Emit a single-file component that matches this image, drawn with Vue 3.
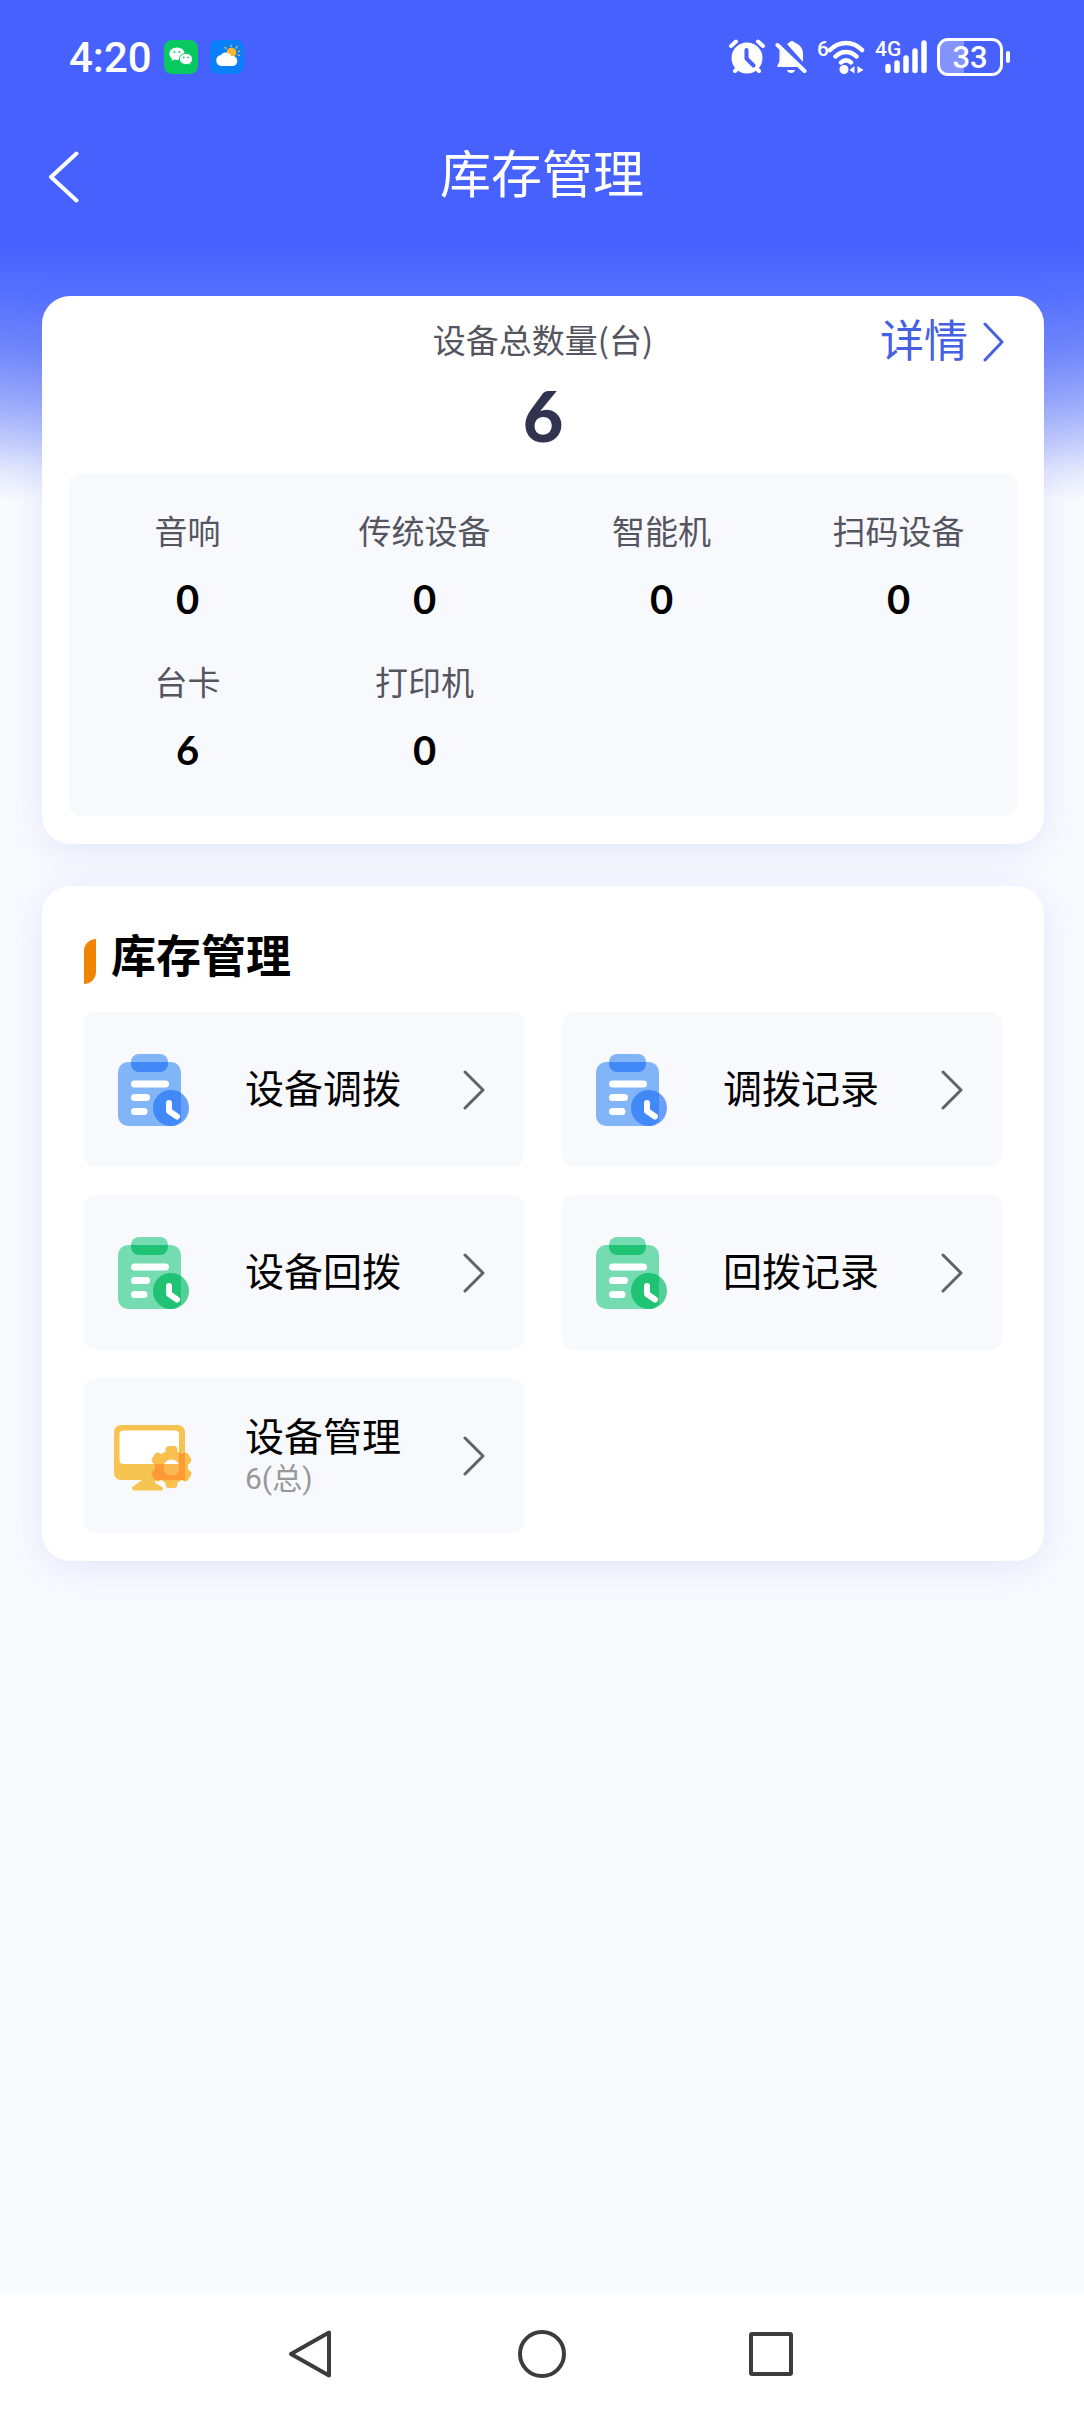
<script setup>
const stats = [
  { label: '音响', value: 0 },
  { label: '传统设备', value: 0 },
  { label: '智能机', value: 0 },
  { label: '扫码设备', value: 0 },
  { label: '台卡', value: 6 },
  { label: '打印机', value: 0 },
]

const entries = [
  { title: '设备调拨', icon: 'board', tone: 'blue' },
  { title: '调拨记录', icon: 'board', tone: 'blue' },
  { title: '设备回拨', icon: 'board', tone: 'green' },
  { title: '回拨记录', icon: 'board', tone: 'green' },
  { title: '设备管理', icon: 'monitor', note: '6(总)' },
]
</script>

<template>
  <div class="page">
    <div class="status">
      <span class="time">4:20</span>
      <svg class="app-icon" viewBox="0 0 34 34" aria-hidden="true">
        <rect width="34" height="34" rx="8" fill="#07c95f" />
        <path d="M13 7.500c-4.400 0-7.600 2.800-7.600 6.300 0 2 1 3.700 2.700 4.900l-.7 2.300 2.700-1.400c.9.300 1.800.4 2.900.4 4.300 0 7.600-2.700 7.600-6.200S17.300 7.500 13 7.500z" fill="#fff" />
        <path d="M22 13.500c-3.800 0-6.600 2.400-6.600 5.500s2.800 5.500 6.600 5.500c.8 0 1.600-.1 2.300-.3l2.400 1.200-.6-2c1.500-1 2.400-2.600 2.400-4.400 0-3.100-2.800-5.500-6.500-5.500z" fill="#fff" stroke="#07c95f" stroke-width="1" />
        <g fill="#07c95f"><circle cx="10.500" cy="12" r="1" /><circle cx="15.500" cy="12" r="1" /><circle cx="19.800" cy="17.300" r=".9" /><circle cx="24.200" cy="17.300" r=".9" /></g>
      </svg>
      <svg class="app-icon weather" viewBox="0 0 34 34" aria-hidden="true">
        <rect width="34" height="34" rx="8" fill="#0a80f8" />
        <g stroke="#f5c63c" stroke-width="1.300" stroke-linecap="round"><path d="M21 6.500v-1M26 8l1-1.500M28.500 11.500l1.300-.5M28 15l1.500.5M16 8.500l-.8-1.200" /></g>
        <circle cx="21.500" cy="12.500" r="4.800" fill="#f9b52c" />
        <path d="M11.500 26a5.600 5.600 0 0 1-.6-11.100 6 6 0 0 1 10.400 1.200c3.500-.7 6 1.700 6 4.800 0 2.900-2.300 5.100-5 5.100z" fill="#fff" />
      </svg>

      <div class="signals">
        <svg width="36" height="36" viewBox="0 0 36 36" aria-hidden="true">
          <g stroke="#fff" stroke-width="4" stroke-linecap="round"><path d="M2 7l5-4.500M34 7l-5-4.500M6 32l4-4M30 32l-4-4" /></g>
          <circle cx="18" cy="19" r="15.500" fill="#fff" />
          <path d="M17.500 11v8.500l7 7" fill="none" stroke="#4661fe" stroke-width="4" stroke-linecap="round" stroke-linejoin="round" />
        </svg>
        <svg class="bell" width="32" height="36" viewBox="0 0 32 36" aria-hidden="true">
          <path d="M12 5c1-.6 1.800-1 2.400-1.500 1-2 4-2 5 0C24 5 28 9 28 14.500V23z" fill="#fff" />
          <path d="M4.500 10.500L23.500 28H2.500c-.8-2 2-3.500 2-7z" fill="#fff" />
          <path d="M2.500 6l27 26" stroke="#fff" stroke-width="4" stroke-linecap="round" />
          <path d="M12 31h8c-1 4-7 4-8 0z" fill="#fff" />
        </svg>
        <div class="wifi">
          <span>6</span>
          <svg width="38" height="36" viewBox="0 0 38 36" aria-hidden="true">
            <g fill="none" stroke="#fff" stroke-width="4.500" stroke-linecap="round"><path d="M3 11c9-9.500 23-9.500 32 0M8.500 17.500c6-6 15-6 21 0M14 23.500c3-3 7-3 10 0" /></g>
            <circle cx="17" cy="30.500" r="4.500" fill="#fff" />
            <path d="M22.500 31l5-4v7.500zM36.500 31l-6-4v7.500z" fill="#fff" />
          </svg>
        </div>
        <div class="cell">
          <span>4G</span>
          <svg width="42" height="36" viewBox="0 0 42 36" aria-hidden="true">
            <g stroke="#fff" stroke-width="5.500" stroke-linecap="round"><path d="M3 27.500v4M12 24v7.500M21 19v12.500M30 12v19.500M39 4v27.500" /></g>
          </svg>
        </div>
        <div class="battery"><span>33</span></div>
      </div>
    </div>

    <header class="topbar">
      <button class="back" type="button" aria-label="返回">
        <svg width="31" height="52" viewBox="0 0 31 52"><path d="M28.500 2.500L3 26l25.500 23.500" fill="none" stroke="#fff" stroke-width="4" stroke-linecap="round" stroke-linejoin="round" /></svg>
      </button>
      <h1>库存管理</h1>
    </header>

    <main>
      <section class="card summary">
        <div class="summary-head">
          <h2>设备总数量(台)</h2>
          <a href="#detail">
            <span>详情</span>
            <svg width="22" height="40" viewBox="0 0 22 40" aria-hidden="true"><path d="M2 2l17 18L2 38" fill="none" stroke="currentColor" stroke-width="3" stroke-linecap="round" stroke-linejoin="round" /></svg>
          </a>
        </div>
        <p class="total">6</p>
        <dl class="stats">
          <div v-for="item in stats" :key="item.label">
            <dt>{{ item.label }}</dt>
            <dd>{{ item.value }}</dd>
          </div>
        </dl>
      </section>

      <section class="card manage">
        <h2>库存管理</h2>
        <div class="entries">
          <button v-for="entry in entries" :key="entry.title" type="button" class="entry">
            <svg v-if="entry.icon === 'board'" class="entry-icon" :class="entry.tone" viewBox="0 0 80 80" aria-hidden="true">
              <rect class="light" x="5" y="12" width="63" height="64" rx="10" />
              <path class="light" d="M18 12a8 8 0 0 1 8-8h21a8 8 0 0 1 8 8z" />
              <path class="dark" d="M18 12h37v2a8 8 0 0 1-8 8H26a8 8 0 0 1-8-8z" />
              <g stroke="#fff" stroke-width="7" stroke-linecap="round"><path d="M21.500 34h31M21.500 47.500h12M21.500 61.500h9.500" /></g>
              <circle class="mid" cx="58" cy="58" r="18" />
              <path class="dark" d="M68 43v28c-3 3-6 5-10 5a18 18 0 1 1 10-33z" />
              <path d="M56 53v8l8 5.500" fill="none" stroke="#fff" stroke-width="6" stroke-linecap="round" stroke-linejoin="round" />
            </svg>
            <svg v-else class="entry-icon" viewBox="0 0 80 80" aria-hidden="true">
              <defs>
                <g id="gear">
                  <circle cx="58.500" cy="51" r="16.500" />
                  <rect x="52.500" y="30" width="12" height="42" rx="4" />
                  <rect x="52.500" y="30" width="12" height="42" rx="4" transform="rotate(60 58.500 51)" />
                  <rect x="52.500" y="30" width="12" height="42" rx="4" transform="rotate(120 58.500 51)" />
                </g>
                <clipPath id="frame"><path d="M0 48h66V9h6v55H0z" /></clipPath>
              </defs>
              <path d="M8 9h57a7 7 0 0 1 7 7v41a7 7 0 0 1-7 7H42v3l7 4c2 1 1 3.500-1 3.500H22c-3 0-4-2.500-2-4l9-6.500H8a7 7 0 0 1-7-7V16a7 7 0 0 1 7-7z" fill="#f5c451" />
              <rect x="6.500" y="14.500" width="59.500" height="33.500" rx="4" fill="#fff" />
              <use href="#gear" fill="#f9c04e" />
              <use href="#gear" fill="#fd9a33" clip-path="url(#frame)" />
              <circle cx="58.500" cy="51.500" r="8" fill="#fbb752" />
              <path d="M51.300 48a8 8 0 0 1 14.400 0z" fill="#fff" />
            </svg>
            <span class="entry-text">
              <span class="entry-title">{{ entry.title }}</span>
              <span v-if="entry.note" class="entry-note">{{ entry.note }}</span>
            </span>
            <svg class="arrow" width="22" height="40" viewBox="0 0 22 40" aria-hidden="true"><path d="M2 2l18 18L2 38" fill="none" stroke="#626266" stroke-width="3" stroke-linecap="round" stroke-linejoin="round" /></svg>
          </button>
        </div>
      </section>
    </main>

    <nav class="system-nav">
      <button type="button" aria-label="返回上一页">
        <svg width="50" height="50" viewBox="0 0 50 50"><path d="M42 3.500v43L4 25z" fill="none" stroke="#3c3c3c" stroke-width="4" stroke-linejoin="round" /></svg>
      </button>
      <button type="button" aria-label="主屏幕">
        <svg width="50" height="50" viewBox="0 0 50 50"><circle cx="25" cy="25" r="22" fill="none" stroke="#3c3c3c" stroke-width="4" /></svg>
      </button>
      <button type="button" aria-label="最近任务">
        <svg width="50" height="50" viewBox="0 0 50 50"><rect x="4" y="5" width="40" height="40" rx="1" fill="none" stroke="#3c3c3c" stroke-width="4" stroke-linejoin="round" /></svg>
      </button>
    </nav>
  </div>
</template>

<style>
body {
  margin: 0;
  background: #f8fafe;
}
</style>

<style scoped>
.page {
  display: flex;
  flex-direction: column;
  min-height: 100vh;
  font-family: "Noto Sans CJK SC", sans-serif;
  color: #000;
  background: #f8fafe linear-gradient(#4661fe 0, #4661fe 240px, #5570ff 294px, #7187fb 350px, #98a8fb 400px, #c0cafc 440px, #e2e7fd 470px, #f8fafe 500px) no-repeat;
}

button {
  padding: 0;
  border: 0;
  background: none;
  font: inherit;
  color: inherit;
  cursor: pointer;
}

svg {
  display: block;
  flex: none;
}

h1,
h2,
p,
dl,
dd {
  margin: 0;
}

.status {
  display: flex;
  align-items: center;
  height: 114px;
  padding: 0 81px 0 69px;
  color: #fff;
  font-family: Roboto, sans-serif;
}

.time {
  font-size: 42px;
  font-weight: 500;
}

.app-icon {
  width: 34px;
  height: 34px;
  margin-left: 12px;
}

.signals {
  display: flex;
  align-items: center;
  margin-left: auto;
}

.bell {
  margin-left: 10px;
}

.wifi,
.cell {
  position: relative;
  margin-left: 20px;
}

.wifi span,
.cell span {
  position: absolute;
  top: -2px;
  left: -10px;
  font-size: 21px;
  font-weight: 500;
  line-height: 24px;
}

.battery {
  position: relative;
  box-sizing: border-box;
  width: 66px;
  height: 38px;
  margin-left: 10px;
  border: 3px solid #fff;
  border-radius: 11px;
  background: linear-gradient(90deg, #8394ff 40%, transparent 40%);
  font-size: 31px;
  font-weight: 500;
  line-height: 33px;
  text-align: center;
}

.battery::after {
  content: "";
  position: absolute;
  top: 10px;
  right: -10px;
  width: 4px;
  height: 12px;
  border-radius: 2px;
  background: #fff;
}

.topbar {
  display: grid;
  grid-template-columns: 1fr auto 1fr;
  align-items: center;
  height: 120px;
  padding: 0 48px;
  color: #fff;
}

.back {
  justify-self: start;
  padding-top: 6px;
}

.topbar h1 {
  padding-bottom: 6px;
  font-size: 51px;
  font-weight: 400;
  line-height: 60px;
}

main {
  display: grid;
  gap: 42px;
  padding: 62px 40px 60px 42px;
}

.card {
  border-radius: 28px;
  background: #fff;
  box-shadow: 0 6px 36px rgba(70, 97, 220, 0.12);
}

.summary {
  padding: 0 27px 28px;
}

.summary-head {
  display: grid;
  grid-template-columns: 1fr auto 1fr;
  align-items: center;
  height: 90px;
}

.summary-head h2 {
  grid-column: 2;
  padding-bottom: 4px;
  font-size: 33px;
  font-weight: 400;
  line-height: 48px;
  color: #55555f;
}

.summary-head a {
  display: flex;
  align-items: center;
  justify-self: end;
  gap: 15px;
  padding: 2px 12px 0 0;
  font-size: 44px;
  line-height: 60px;
  color: #4560e0;
  text-decoration: none;
}

.summary-head a span {
  padding-bottom: 8px;
}

.total {
  font-family: Lato, sans-serif;
  font-size: 70px;
  font-weight: 900;
  line-height: 58px;
  text-align: center;
  color: #32344f;
}

.stats {
  display: grid;
  grid-template-columns: repeat(4, 1fr);
  row-gap: 36px;
  margin-top: 29px;
  padding: 35px 0 42px;
  border-radius: 12px;
  background: #f8f9fd;
  text-align: center;
}

.stats dt {
  font-size: 33px;
  line-height: 45px;
  color: #55555f;
}

.stats dd {
  margin-top: 22px;
  font-family: Lato, sans-serif;
  font-size: 40px;
  font-weight: 700;
  line-height: 48px;
}

.manage {
  padding: 38px 42px 28px;
}

.manage h2 {
  display: flex;
  align-items: center;
  gap: 15px;
  font-size: 45px;
  font-weight: 700;
  line-height: 60px;
}

.manage h2::before {
  content: "";
  width: 12px;
  height: 45px;
  margin-top: 14px;
  border-radius: 12px 0;
  background: #f08300;
}

.entries {
  display: grid;
  grid-template-columns: 1fr 1fr;
  gap: 28px 38px;
  margin-top: 28px;
}

.entry {
  display: flex;
  align-items: center;
  height: 155px;
  padding: 0 39px 0 29px;
  border-radius: 12px;
  background: #f8f9fd;
  text-align: left;
}

.entry-icon {
  width: 80px;
  height: 80px;
}

.blue .light {
  fill: #82b4f8;
}

.blue .mid {
  fill: #68a0f7;
}

.blue .dark {
  fill: #4189f7;
}

.green .light {
  fill: #75dcb1;
}

.green .mid {
  fill: #52d096;
}

.green .dark {
  fill: #20c373;
}

.entry-text {
  display: grid;
  margin-left: 52px;
  font-family: Roboto, "Noto Sans CJK SC", sans-serif;
}

.entry-title {
  font-size: 39px;
  line-height: 46px;
}

.entry-note {
  font-size: 30px;
  line-height: 36px;
  color: #999;
}

.arrow {
  margin-left: auto;
}

.system-nav {
  display: flex;
  align-items: center;
  justify-content: center;
  gap: 180px;
  height: 117px;
  margin-top: auto;
  background: #fff;
}
</style>
